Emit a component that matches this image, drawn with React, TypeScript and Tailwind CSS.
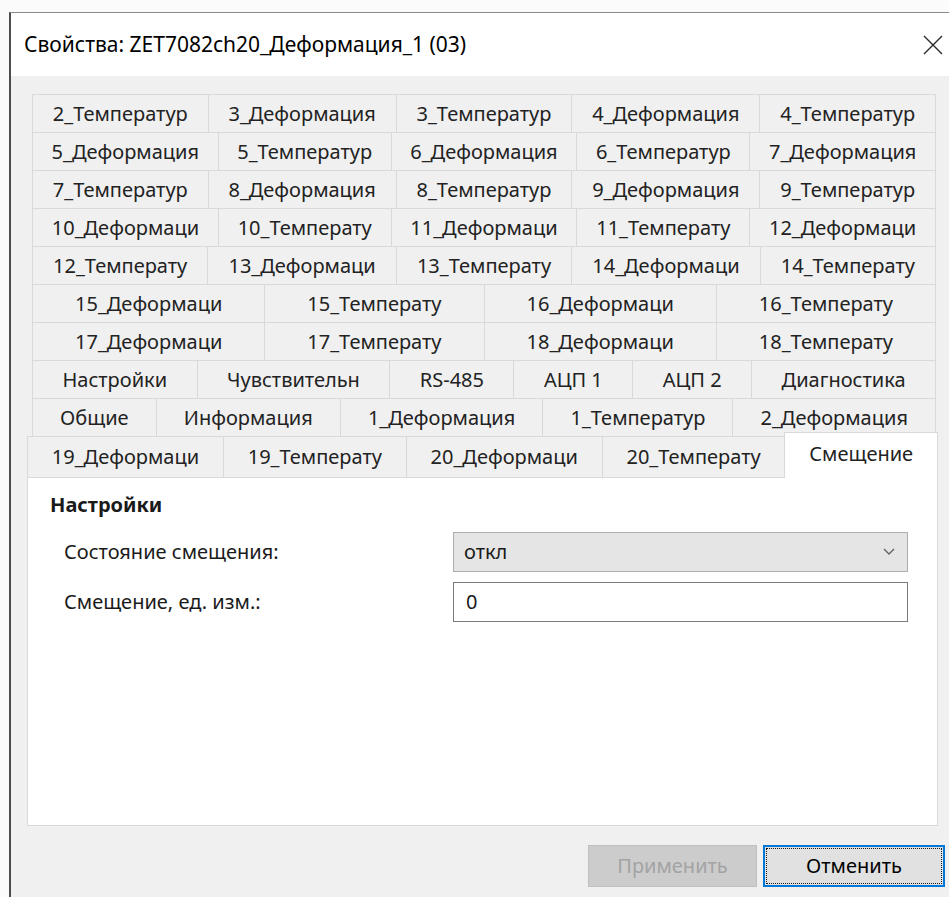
import React from "react";

const font = { fontFamily: '"Noto Sans", "Open Sans", sans-serif' };

const backRows: string[][] = [
  ["2_Температур", "3_Деформация", "3_Температур", "4_Деформация", "4_Температур"],
  ["5_Деформация", "5_Температур", "6_Деформация", "6_Температур", "7_Деформация"],
  ["7_Температур", "8_Деформация", "8_Температур", "9_Деформация", "9_Температур"],
  ["10_Деформаци", "10_Температу", "11_Деформаци", "11_Температу", "12_Деформаци"],
  ["12_Температу", "13_Деформаци", "13_Температу", "14_Деформаци", "14_Температу"],
  ["15_Деформаци", "15_Температу", "16_Деформаци", "16_Температу"],
  ["17_Деформаци", "17_Температу", "18_Деформаци", "18_Температу"],
  ["Настройки", "Чувствительн", "RS-485", "АЦП 1", "АЦП 2", "Диагностика"],
  ["Общие", "Информация", "1_Деформация", "1_Температур", "2_Деформация"],
];

const frontRow = ["19_Деформаци", "19_Температу", "20_Деформаци", "20_Температу"];

function Tab({ label, last }: { label: string; last?: boolean }) {
  return (
    <div
      className={
        "flex-auto h-full flex items-center justify-center px-[8px] whitespace-nowrap border-l border-t border-[#d9d9d9] text-[#222222] " +
        (last ? "border-r" : "")
      }
    >
      {label}
    </div>
  );
}

function CloseIcon() {
  return (
    <svg width="20" height="20" viewBox="0 0 20 20" fill="none" stroke="#2b2b2b" strokeWidth="1.4">
      <path d="M1 1 L19 19 M19 1 L1 19" />
    </svg>
  );
}

function Chevron() {
  return (
    <svg width="12" height="8" viewBox="0 0 12 8" fill="none" stroke="#606060" strokeWidth="1.3">
      <path d="M1 1 L6 6 L11 1" />
    </svg>
  );
}

export default function App() {
  return (
    <div className="w-[949px] h-[897px] bg-[#fbfbfb] overflow-hidden pl-[9px] pt-[12px] text-[20px]" style={font}>
      <div className="h-[885px] flex flex-col border-l-2 border-t border-l-[#4d4d4d] border-t-[#8a8a8a] bg-[#f0f0f0]">
        {/* title bar */}
        <div className="h-[63px] shrink-0 bg-white flex items-center justify-between pl-[13px] pr-[6px]">
          <span className="text-[21px] text-black whitespace-nowrap">Свойства: ZET7082ch20_Деформация_1 (03)</span>
          <CloseIcon />
        </div>

        {/* body */}
        <div className="flex-1 flex flex-col pt-[18px] pl-[16px] pr-[11px]">
          {/* tab strip */}
          <div className="flex flex-col">
            {backRows.map((row, i) => (
              <div key={i} className="flex h-[38px] ml-[5px] mr-[2px]">
                {row.map((t, j) => (
                  <Tab key={t} label={t} last={j === row.length - 1} />
                ))}
              </div>
            ))}
            <div className="flex items-end h-[41px]">
              {frontRow.map((t) => (
                <Tab key={t} label={t} />
              ))}
              <div className="relative z-10 flex-auto h-[46px] -mb-px px-[8px] pb-[4px] flex items-center justify-center whitespace-nowrap bg-white border-l border-t border-r border-[#d9d9d9] text-[#222222]">
                Смещение
              </div>
            </div>
          </div>

          {/* page */}
          <div className="h-[349px] bg-white border border-[#d9d9d9] pl-[22px] pr-[29px] pt-[13px]">
            <div className="font-bold text-[#1a1a1a] leading-[28px]">Настройки</div>
            <div className="mt-[13px] grid grid-cols-[1fr_455px] gap-y-[10px] pl-[14px] items-center text-[#1a1a1a]">
              <div>Состояние смещения:</div>
              <div className="h-[40px] bg-[#e5e5e5] border border-[#adadad] flex items-center justify-between pl-[10px] pr-[12px]">
                <span>откл</span>
                <Chevron />
              </div>
              <div>Смещение, ед. изм.:</div>
              <div className="h-[40px] bg-white border border-[#7a7a7a] flex items-center pl-[12px]">
                <span>0</span>
              </div>
            </div>
          </div>

          {/* buttons */}
          <div className="mt-[19px] flex justify-end gap-[6px] -mr-[7px]">
            <div className="w-[169px] h-[42px] bg-[#cccccc] border border-[#bfbfbf] flex items-center justify-center text-[#a3a3a3]">
              Применить
            </div>
            <div className="relative w-[182px] h-[42px] bg-[#e1e1e1] border-2 border-[#0078d7] flex items-center justify-center text-black">
              <div className="absolute inset-[1px] border border-dotted border-[#1a1a1a]" />
              Отменить
            </div>
          </div>
        </div>
      </div>
    </div>
  );
}
